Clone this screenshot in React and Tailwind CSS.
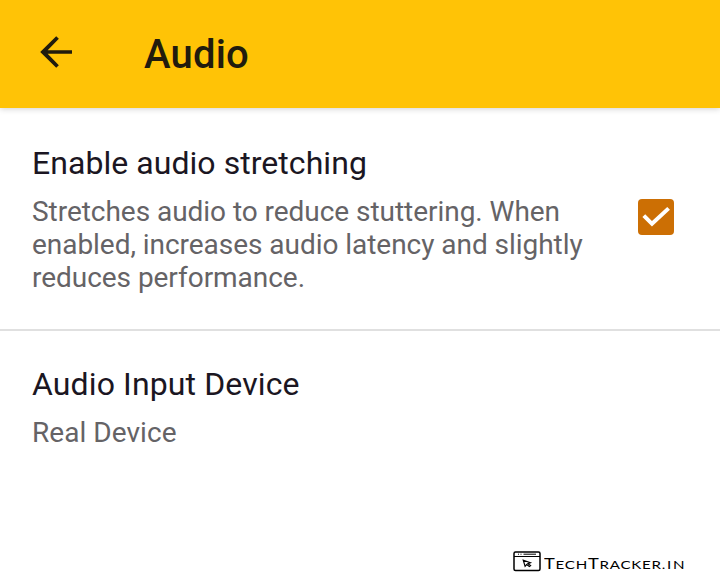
export default function App() {
  return (
    <div className="flex h-[585px] w-[720px] flex-col overflow-hidden bg-white font-['Roboto',sans-serif]">
      <header className="z-10 flex h-[108px] shrink-0 items-center bg-[#ffc306] pl-8 text-[#211b0d] shadow-[0_1px_6px_rgba(0,0,0,0.18)]">
        <svg className="mt-[-4px] h-12 w-12" viewBox="0 0 24 24" fill="currentColor">
          <path d="M20 11.1H7.83l5.59-5.69L12.1 4.1l-8 7.9 8 7.9 1.32-1.31L7.83 12.9H20z" />
        </svg>
        <h1 className="ml-16 mt-[2px] text-[40px] leading-[48px] font-medium tracking-[0.2px]">Audio</h1>
      </header>
      <section className="flex h-[223px] shrink-0 border-b-2 border-[#e0e0e0] pl-8 pt-9">
        <div className="w-[606px]">
          <h2 className="text-[32px] leading-[38px] tracking-[0.05px] whitespace-nowrap text-[#1b1622]">Enable audio stretching</h2>
          <p className="mt-[13px] text-[28px] leading-[33px] tracking-[-0.04px] whitespace-nowrap text-[#656366]">
            Stretches audio to reduce stuttering. When<br />enabled, increases audio latency and slightly<br />reduces performance.
          </p>
        </div>
        <div className="mt-[55px] h-9 w-9 rounded bg-[#cc6f04]">
          <svg className="h-9 w-9" viewBox="0 0 36 36" fill="none" stroke="white" strokeWidth="4">
            <path d="M5.8 16.6l8.2 8.2L30.6 9.4" />
          </svg>
        </div>
      </section>
      <section className="flex-1 pl-8 pt-[34px]">
        <h2 className="text-[32px] leading-[38px] tracking-[0.12px] text-[#1b1622]">Audio Input Device</h2>
        <p className="mt-[13px] text-[28px] leading-[33px] tracking-[0.05px] text-[#656366]">Real Device</p>
      </section>
      <footer className="flex h-[34px] items-start pl-[513px] text-black">
        <svg className="h-[21px] w-7" viewBox="0 0 28 21" fill="none" stroke="currentColor" strokeWidth="1.5">
          <rect x="1" y="1" width="26" height="18.5" rx="1.5" />
          <path strokeWidth="1" d="M1 5.5h26M5 3.2h1M7.5 3.2h1M10.5 3.2H23" />
          <path strokeWidth="1.2" d="M10.3 9.3l1.8 6 1.5-1.7 2.8 2 1.2-1-2.7-1.9 2.5-1z" />
        </svg>
        <div className="ml-[3px] origin-left scale-x-[1.26] pt-px text-[14.5px] leading-6 tracking-[0.6px] whitespace-nowrap font-['Lato',sans-serif]">T<span className="text-[12px]">ECH</span>T<span className="text-[12px]">RACKER</span><span className="text-[12px] tracking-[1.3px]">.IN</span></div>
      </footer>
    </div>
  );
}
